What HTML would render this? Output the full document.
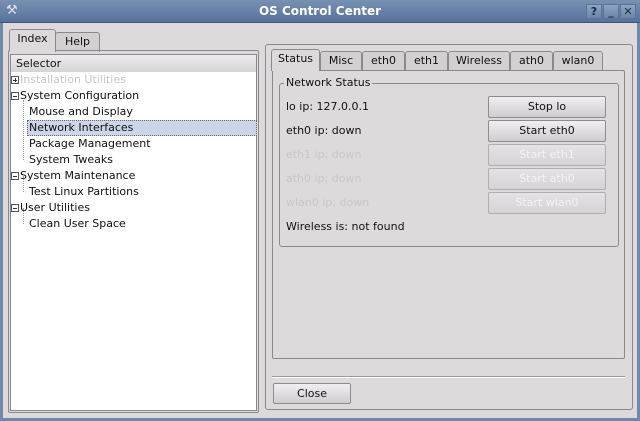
<!DOCTYPE html>
<html><head><style>
*{margin:0;padding:0;box-sizing:border-box}
body{width:640px;height:421px;background:#dedadc;font-family:"DejaVu Sans","Liberation Sans",sans-serif;font-size:11px;color:#111;position:relative;overflow:hidden}
.a{position:absolute}
.title{left:0;top:0;width:640px;height:23px;background:linear-gradient(#7891b3,#56729b);border-bottom:1px solid #3d5576}
.title span{position:absolute;left:0;width:640px;text-align:center;top:4px;color:#fff;font-weight:bold;font-size:12px}
.tb{top:4px;width:16px;height:15px;background:linear-gradient(#8ea5c3,#6a85ab);border:1px solid #5a7398;color:#1c2a40;font-size:11px;text-align:center;line-height:13px;font-weight:bold}
.tab{border:1px solid #8a8a8e;border-bottom:none;background:#d4d0d2;border-radius:3px 3px 0 0;text-align:center;line-height:18px;height:20px}
.tab.sel{background:#dedadc;height:22px}
.btn{left:488px;width:118px;height:22px;border:1px solid #8c8c90;border-radius:2px;background:linear-gradient(#f0eef0,#d0cdd0);text-align:center;line-height:20px}
.btn.d{color:#f4f2f4;background:linear-gradient(#e4e2e4,#d6d3d6);border-color:#b0aeb2}
.row{left:0;height:16px;line-height:16px;white-space:nowrap}
.dis{color:#c8c6c8}
.box{width:8px;height:8px;border:1px solid #555;display:inline-block;position:relative;vertical-align:-1px;margin-right:1px;background:#fff}
.box:before{content:"";position:absolute;left:1px;top:3px;width:4px;height:1px;background:#333}
.box.p:after{content:"";position:absolute;left:3px;top:1px;width:1px;height:4px;background:#333}
.lbl{left:286px}
</style></head><body>
<div class="a title"><span>OS Control Center</span>
<div class="a" style="left:6px;top:3px;color:#dde;font-size:13px">⚒</div>
<div class="a tb" style="left:586px">?</div>
<div class="a tb" style="left:603px">_</div>
<div class="a tb" style="left:620px">✕</div>
</div>
<div class="a" style="left:0;top:23px;width:3px;height:398px;background:#6f88ab"></div>
<div class="a" style="left:637px;top:23px;width:3px;height:398px;background:#6f88ab"></div>
<div class="a" style="left:0;top:418px;width:640px;height:3px;background:#6f88ab"></div>

<div class="a tab" style="left:55px;top:32px;width:45px">Help</div>
<div class="a" style="left:8px;top:50px;width:251px;height:363px;border:1px solid #8a8a8e;border-radius:2px"></div>
<div class="a tab sel" style="left:9px;top:29px;width:47px">Index</div>
<div class="a" style="left:10px;top:54px;width:247px;height:19px;border:1px solid #8a8a8e;background:linear-gradient(#eeecee,#d6d3d6);padding-left:5px;line-height:17px">Selector</div>
<div class="a" style="left:10px;top:72px;width:247px;height:339px;background:#fff;border:1px solid #8a8a8e;border-top:none">
<div class="a" style="left:16px;top:48px;width:230px;height:16px;background:#ccd6e8;border:1px dotted #666"></div>
<div class="a row dis" style="top:0"><span class="box p"></span>Installation Utilities</div>
<div class="a row" style="top:16px"><span class="box"></span>System Configuration</div>
<div class="a row" style="top:32px;left:18px">Mouse and Display</div>
<div class="a row" style="top:48px;left:18px">Network Interfaces</div>
<div class="a row" style="top:64px;left:18px">Package Management</div>
<div class="a row" style="top:80px;left:18px">System Tweaks</div>
<div class="a row" style="top:96px"><span class="box"></span>System Maintenance</div>
<div class="a row" style="top:112px;left:18px">Test Linux Partitions</div>
<div class="a row" style="top:128px"><span class="box"></span>User Utilities</div>
<div class="a row" style="top:144px;left:18px">Clean User Space</div>
<div class="a" style="left:12px;top:28px;width:1px;height:60px;border-left:1px dotted #999"></div>
<div class="a" style="left:12px;top:104px;width:1px;height:16px;border-left:1px dotted #999"></div>
<div class="a" style="left:12px;top:136px;width:1px;height:16px;border-left:1px dotted #999"></div>
</div>

<div class="a" style="left:265px;top:44px;width:368px;height:366px;border:1px solid #8a8a8e;border-radius:3px"></div>
<div class="a tab" style="left:320px;top:51px;width:42px">Misc</div>
<div class="a tab" style="left:362px;top:51px;width:43px">eth0</div>
<div class="a tab" style="left:405px;top:51px;width:43px">eth1</div>
<div class="a tab" style="left:448px;top:51px;width:62px">Wireless</div>
<div class="a tab" style="left:510px;top:51px;width:43px">ath0</div>
<div class="a tab" style="left:553px;top:51px;width:50px">wlan0</div>
<div class="a" style="left:272px;top:70px;width:353px;height:289px;border:1px solid #8a8a8e;border-radius:2px"></div>
<div class="a tab sel" style="left:271px;top:49px;width:49px">Status</div>
<div class="a" style="left:279px;top:83px;width:340px;height:164px;border:1px solid #8a8a8e;border-radius:3px"></div>
<div class="a" style="left:284px;top:76px;background:#dedadc;padding:0 2px;line-height:14px">Network Status</div>
<div class="a lbl" style="top:100px">lo ip: 127.0.0.1</div>
<div class="a lbl" style="top:124px">eth0 ip: down</div>
<div class="a lbl dis" style="top:148px">eth1 ip: down</div>
<div class="a lbl dis" style="top:172px">ath0 ip: down</div>
<div class="a lbl dis" style="top:196px">wlan0 ip: down</div>
<div class="a lbl" style="top:220px">Wireless is: not found</div>
<div class="a btn" style="top:96px">Stop lo</div>
<div class="a btn" style="top:120px">Start eth0</div>
<div class="a btn d" style="top:144px">Start eth1</div>
<div class="a btn d" style="top:168px">Start ath0</div>
<div class="a btn d" style="top:192px">Start wlan0</div>
<div class="a" style="left:272px;top:376px;width:353px;height:2px;border-top:1px solid #9a9a9e;border-bottom:1px solid #fff"></div>
<div class="a btn" style="left:273px;top:383px;width:78px;height:21px;line-height:19px">Close</div>
</body></html>
